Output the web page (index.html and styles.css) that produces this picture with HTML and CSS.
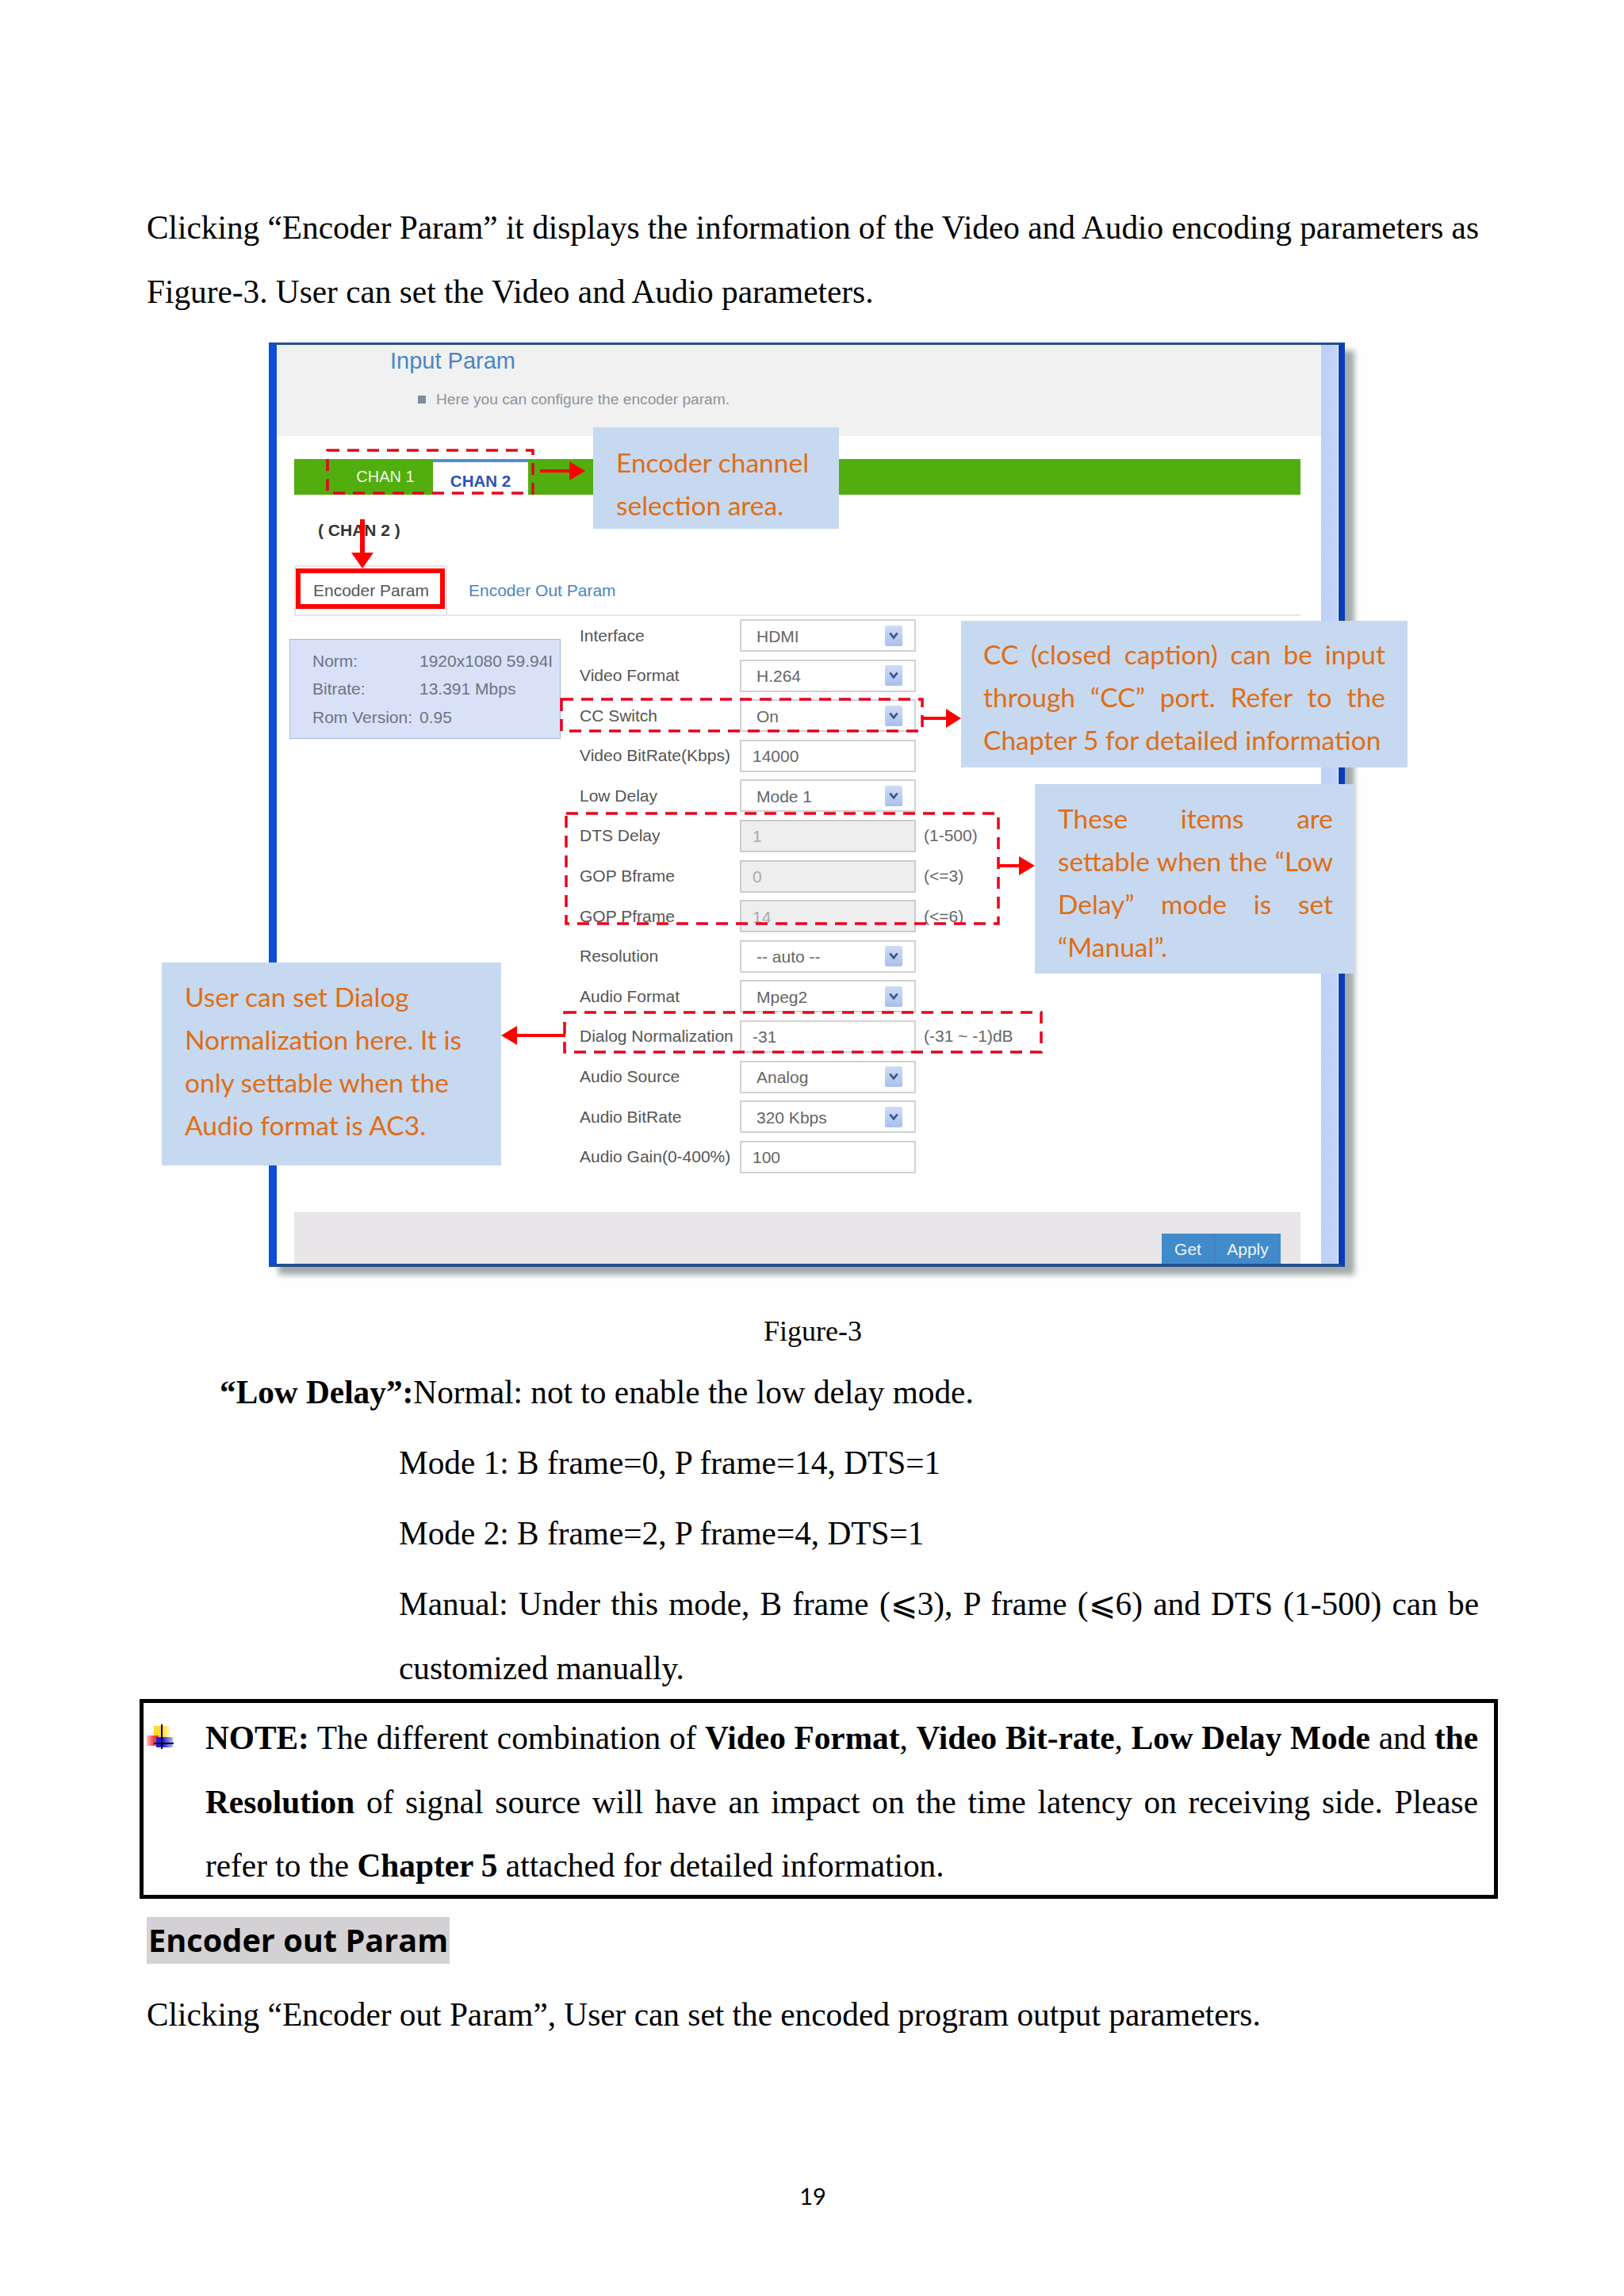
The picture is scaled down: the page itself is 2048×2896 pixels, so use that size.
FILE: index.html
```html
<!DOCTYPE html>
<html lang="en">
  <head>
    <meta charset="UTF-8" />
    <title>Encoder Param</title>
    <link rel="stylesheet" href="styles.css">
  </head>
  <body>
    <div class="page">
      <p class="text intro">Clicking “Encoder Param” it displays the information of the Video and Audio encoding parameters as Figure-3. User can set the Video and Audio parameters.</p>

      <div class="figure">
        <div class="shot">
          <div class="shot-main">
            <div class="shot-head">
              <div class="shot-title">Input Param</div>
              <div class="shot-sub"><span class="sub-mark"></span>Here you can configure the encoder param.</div>
            </div>
            <div class="shot-body">
              <div class="chan-bar">
                <span class="chan">CHAN 1</span>
                <span class="chan chan-on">CHAN 2</span>
              </div>
              <div class="chan-name">( CHAN 2 )</div>
              <div class="tabs">
                <span class="tab tab-on">Encoder Param</span>
                <span class="tab">Encoder Out Param</span>
              </div>
              <div class="columns">
                <div class="info">
                  <span>Norm:</span><span>1920x1080 59.94I</span>
                  <span>Bitrate:</span><span>13.391 Mbps</span>
                  <span>Rom Version:</span><span>0.95</span>
                </div>
                <div class="form">
                  <label>Interface</label>
                  <div class="field select">HDMI<span class="drop"><svg viewBox="0 0 12 10"><path d="M2 2l4 5 4-5" /></svg></span></div>
                  <span></span>
                  <label>Video Format</label>
                  <div class="field select">H.264<span class="drop"><svg viewBox="0 0 12 10"><path d="M2 2l4 5 4-5" /></svg></span></div>
                  <span></span>
                  <label>CC Switch</label>
                  <div class="field select">On<span class="drop"><svg viewBox="0 0 12 10"><path d="M2 2l4 5 4-5" /></svg></span></div>
                  <span></span>
                  <label>Video BitRate(Kbps)</label>
                  <div class="field">14000</div>
                  <span></span>
                  <label>Low Delay</label>
                  <div class="field select">Mode 1<span class="drop"><svg viewBox="0 0 12 10"><path d="M2 2l4 5 4-5" /></svg></span></div>
                  <span></span>
                  <label>DTS Delay</label>
                  <div class="field off">1</div>
                  <span class="hint">(1-500)</span>
                  <label>GOP Bframe</label>
                  <div class="field off">0</div>
                  <span class="hint">(&lt;=3)</span>
                  <label>GOP Pframe</label>
                  <div class="field off">14</div>
                  <span class="hint">(&lt;=6)</span>
                  <label>Resolution</label>
                  <div class="field select">-- auto --<span class="drop"><svg viewBox="0 0 12 10"><path d="M2 2l4 5 4-5" /></svg></span></div>
                  <span></span>
                  <label>Audio Format</label>
                  <div class="field select">Mpeg2<span class="drop"><svg viewBox="0 0 12 10"><path d="M2 2l4 5 4-5" /></svg></span></div>
                  <span></span>
                  <label>Dialog Normalization</label>
                  <div class="field">-31</div>
                  <span class="hint">(-31 ~ -1)dB</span>
                  <label>Audio Source</label>
                  <div class="field select">Analog<span class="drop"><svg viewBox="0 0 12 10"><path d="M2 2l4 5 4-5" /></svg></span></div>
                  <span></span>
                  <label>Audio BitRate</label>
                  <div class="field select">320 Kbps<span class="drop"><svg viewBox="0 0 12 10"><path d="M2 2l4 5 4-5" /></svg></span></div>
                  <span></span>
                  <label>Audio Gain(0-400%)</label>
                  <div class="field">100</div>
                  <span></span>
                </div>
              </div>
              <div class="shot-foot">
                <span class="btn">Get</span>
                <span class="btn btn-apply">Apply</span>
              </div>
            </div>
          </div>
          <div class="shot-strip"></div>
        </div>

        <!-- annotations, viewBox uses page coordinates -->
        <svg class="marks" viewBox="339 432 1500 1200" width="1500" height="1200">
          <g class="dash">
            <rect x="413" y="568" width="259" height="54" />
            <rect x="708" y="882" width="455" height="40" />
            <rect x="714" y="1026" width="545" height="139" />
            <rect x="712" y="1277" width="601" height="50" />
          </g>
          <rect class="box" x="376" y="720" width="182" height="45" />
          <g class="arrow">
            <path d="M681 592h37v-10l20 12-20 12v-10h-37z" />
            <path d="M454 655h6v42h11l-14 20-14-20h11z" />
            <path d="M1163 904h30v-10l19 12-19 12v-10h-30z" />
            <path d="M1259 1090h26v-10l20 12-20 12v-10h-26z" />
            <path d="M713 1304h-61v-10l-20 12 20 12v-10h61z" />
          </g>
        </svg>

        <div class="note-box box-chan">Encoder channel<br>selection area.</div>
        <div class="note-box box-cc">
          <span class="fill">CC (closed caption) can be input</span>
          <span class="fill">through “CC” port. Refer to the</span>
          <span>Chapter 5 for detailed information</span>
        </div>
        <div class="note-box box-delay">
          <span class="fill">These items are</span>
          <span class="fill">settable when the “Low</span>
          <span class="fill">Delay” mode is set</span>
          <span>“Manual”.</span>
        </div>
        <div class="note-box box-dialog">User can set Dialog<br>Normalization here. It is<br>only settable when the<br>Audio format is AC3.</div>
      </div>

      <p class="caption">Figure-3</p>
      <p class="text low-delay"><b>“Low Delay”:</b>Normal: not to enable the low delay mode.</p>
      <p class="text mode">Mode 1: B frame=0, P frame=14, DTS=1</p>
      <p class="text mode">Mode 2: B frame=2, P frame=4, DTS=1</p>
      <p class="text mode last">Manual: Under this mode, B frame (⩽3), P frame (⩽6) and DTS (1-500) can be customized manually.</p>

      <div class="note">
        <svg class="note-icon" viewBox="0 0 36 34" width="36" height="34">
          <defs>
            <linearGradient id="fadeY" x1="0" x2="1" y1="0" y2="0"><stop offset="0.5" stop-color="#ffd92e" /><stop offset="1" stop-color="#fff4b0" /></linearGradient>
            <linearGradient id="fadeR" x1="0" x2="1" y1="0" y2="0"><stop offset="0" stop-color="#ffc4c4" /><stop offset="0.6" stop-color="#f53a3a" /></linearGradient>
            <linearGradient id="fadeB" x1="0" x2="1" y1="0" y2="0"><stop offset="0.4" stop-color="#1f1fe0" /><stop offset="1" stop-color="#b8b8f5" /></linearGradient>
          </defs>
          <rect x="9" y="2" width="20" height="19" fill="url(#fadeY)" />
          <rect x="0" y="14" width="15" height="13" fill="url(#fadeR)" />
          <rect x="12" y="16" width="21" height="13" fill="url(#fadeB)" />
          <path d="M19 0v31M9 24h25" stroke="#000" stroke-width="2" />
        </svg>
        <p class="note-text"><b>NOTE:</b> The different combination of <b>Video Format</b>, <b>Video Bit-rate</b>, <b>Low Delay Mode</b> and <b>the Resolution</b> of signal source will have an impact on the time latency on receiving side. Please refer to the <b>Chapter 5</b> attached for detailed information.</p>
      </div>

      <h2 class="section"><span>Encoder out Param</span></h2>
      <p class="text">Clicking “Encoder out Param”, User can set the encoded program output parameters.</p>
      <div class="page-no">19</div>
    </div>
  </body>
</html>
```

FILE: styles.css
```css
body {
  margin: 0;
  background-color: #fefefe;
  color: #000;
  font-family: "Liberation Serif", serif;
}

.page {
  width: 2048px;
  height: 2896px;
  box-sizing: border-box;
  padding: 247px 183px 0 185px;
  overflow: hidden;
}

.text {
  margin: 0;
  font-size: 41.3px;
  line-height: 81px;
  text-align: justify;
}

.intro::first-line {
  word-spacing: -1.5px;
}

/* figure */
.figure {
  position: relative;
  width: 1357px;
  height: 1166px;
  margin: 23px 0 0 154px;
}

.shot {
  display: flex;
  box-sizing: border-box;
  width: 1357px;
  height: 1166px;
  background-color: #fff;
  border-top: 3px solid #24508f;
  border-bottom: 4px solid #24508f;
  border-left: 10px solid #0b4fd6;
  border-right: 8px solid #0a3db5;
  box-shadow: 12px 10px 7px #a3abab;
  font-family: "Liberation Sans", sans-serif;
  font-size: 21px;
  color: #555;
}

.shot-main {
  width: 1317px;
  display: flex;
  flex-direction: column;
}

.shot-strip {
  width: 21px;
  margin-right: 1px;
  background: linear-gradient(to right, #bcd0f5, #c4d5f8);
}

.shot-head {
  height: 115px;
  box-sizing: border-box;
  padding: 0 0 0 143px;
  background-color: #f1f1f2;
}

.shot-title {
  font-size: 29px;
  line-height: 40px;
  color: #4a86c4;
}

.shot-sub {
  display: flex;
  align-items: center;
  margin: 10px 0 0 35px;
  font-size: 19.2px;
  line-height: 38px;
  color: #8b949c;
}

.sub-mark {
  width: 10px;
  height: 10px;
  margin-right: 13px;
  background-color: #7d8c9c;
}

.shot-body {
  flex: 1;
  display: flex;
  flex-direction: column;
  padding: 29px 26px 0 22px;
}

.chan-bar {
  display: flex;
  align-items: flex-end;
  height: 45px;
  padding-left: 55px;
  background-color: #52ae0e;
}

.chan {
  width: 120px;
  line-height: 45px;
  text-align: center;
  color: #eef7e8;
  font-size: 20px;
}

.chan-on {
  box-sizing: border-box;
  height: 45px;
  width: 120px;
  border-top: 4px solid #4f8fd0;
  background-color: #fff;
  color: #2c52b8;
  font-size: 20.5px;
  font-weight: bold;
  line-height: 47px;
}

.chan-name {
  height: 89px;
  padding-left: 30px;
  line-height: 90px;
  font-weight: bold;
  color: #333;
}

.tabs {
  display: flex;
  height: 62px;
  border-bottom: 2px solid #e6e6e6;
  line-height: 64px;
  white-space: nowrap;
}

.tab {
  padding: 0 25px 0 27px;
  color: #4a86c4;
}

.tab-on {
  height: 62px;
  width: 193px;
  box-sizing: border-box;
  padding: 0 0 0 22px;
  border: 2px solid #e6e6e6;
  border-bottom: 0;
  background-color: #fff;
  color: #555;
  line-height: 60px;
}

.columns {
  display: flex;
  align-items: flex-start;
  margin-top: 4px;
}

.info {
  display: grid;
  grid-template-columns: 135px auto;
  grid-auto-rows: 35.5px;
  align-items: center;
  box-sizing: border-box;
  width: 342px;
  height: 126px;
  margin: 25px 0 0 -6px;
  padding: 9px 0 0 28px;
  background-color: #d9e1f8;
  border: 1px solid #a5b4e6;
  color: #6d7480;
  white-space: nowrap;
}

.form {
  display: grid;
  grid-template-columns: 202px 222px 160px;
  grid-auto-rows: 41px;
  row-gap: 9.6px;
  align-items: center;
  margin-left: 24px;
  white-space: nowrap;
}

.field {
  display: flex;
  align-items: center;
  justify-content: space-between;
  box-sizing: border-box;
  height: 41px;
  padding: 2px 15px 0 14px;
  background-color: #fff;
  border: 2px solid #d2d2d2;
  color: #666;
}

.select {
  padding-left: 19px;
}

.off {
  background-color: #eeeeee;
  border-color: #cccccc;
  color: #aaa;
}

.drop {
  display: flex;
  align-items: center;
  justify-content: center;
  width: 22px;
  height: 26px;
  margin-top: -2px;
  background: linear-gradient(#cfdcf7, #a9c0ee);
  border-radius: 2px;
}

.drop svg {
  width: 14px;
  height: 12px;
  fill: none;
  stroke: #3f5585;
  stroke-width: 2.4;
}

.hint {
  padding-left: 10px;
  color: #666;
}

.shot-foot {
  display: flex;
  justify-content: flex-end;
  align-items: flex-end;
  height: 65px;
  margin-top: 49px;
  padding-right: 25px;
  background-color: #e8e6e8;
  border-top: 1px solid #e0e0e0;
  box-sizing: border-box;
}

.btn {
  box-sizing: border-box;
  width: 66px;
  height: 38px;
  line-height: 40px;
  text-align: center;
  background-color: #428bca;
  color: #eef5fb;
}

.btn-apply {
  width: 84px;
  border-left: 1px solid #3a7db8;
}

/* red marks over the screenshot */
.marks {
  position: absolute;
  left: 0;
  top: 0;
  overflow: visible;
  pointer-events: none;
}

.dash rect {
  fill: none;
  stroke: #e8001c;
  stroke-width: 3.5;
  stroke-dasharray: 15 10;
}

.box {
  fill: none;
  stroke: #fe0000;
  stroke-width: 6;
}

.arrow path {
  fill: #fe0000;
}

.note-box {
  position: absolute;
  box-sizing: border-box;
  background-color: #c6d9f0;
  color: #e06d14;
  font-family: Lato, sans-serif;
  font-size: 33.5px;
  line-height: 54px;
}

.note-box span {
  display: block;
}

.note-box .fill {
  text-align: justify;
  text-align-last: justify;
}

.box-chan {
  left: 409px;
  top: 107px;
  width: 310px;
  height: 128px;
  padding: 17px 0 0 29px;
}

.box-cc {
  left: 873px;
  top: 351px;
  width: 563px;
  height: 185px;
  padding: 15px 28px 0 28px;
}

.box-delay {
  left: 966px;
  top: 557px;
  width: 403px;
  height: 239px;
  padding: 16px 27px 0 29px;
}

.box-dialog {
  left: -135px;
  top: 782px;
  width: 428px;
  height: 256px;
  padding: 16px 0 0 29px;
}

/* text below the figure */
.caption {
  margin: 0;
  padding-top: 41px;
  font-size: 36px;
  line-height: 81px;
  text-align: center;
}

.low-delay {
  margin: -4px 0 8px 92px;
}

.mode {
  margin: 0 0 8px 318px;
}

.mode.last {
  margin-bottom: 0;
}

.note {
  position: relative;
  box-sizing: border-box;
  width: 1713px;
  height: 252px;
  margin: -2px 0 0 -9px;
  padding: 4px 20px 0 78px;
  border: 5px solid #000;
}

.note-icon {
  position: absolute;
  left: 4px;
  top: 27px;
}

.note-text {
  margin: 0;
  font-size: 41.3px;
  line-height: 80.5px;
  text-align: justify;
}

.section {
  margin: 23px 0 24px;
  height: 59px;
  font-family: "Open Sans", sans-serif;
  font-size: 39.7px;
  line-height: 59px;
  font-weight: bold;
}

.section span {
  display: inline-block;
  background-color: #d3d1d3;
  padding: 0 2px;
}

.page-no {
  margin-top: 168px;
  text-align: center;
  font-family: Lato, sans-serif;
  font-size: 29px;
  line-height: 40px;
}
```
